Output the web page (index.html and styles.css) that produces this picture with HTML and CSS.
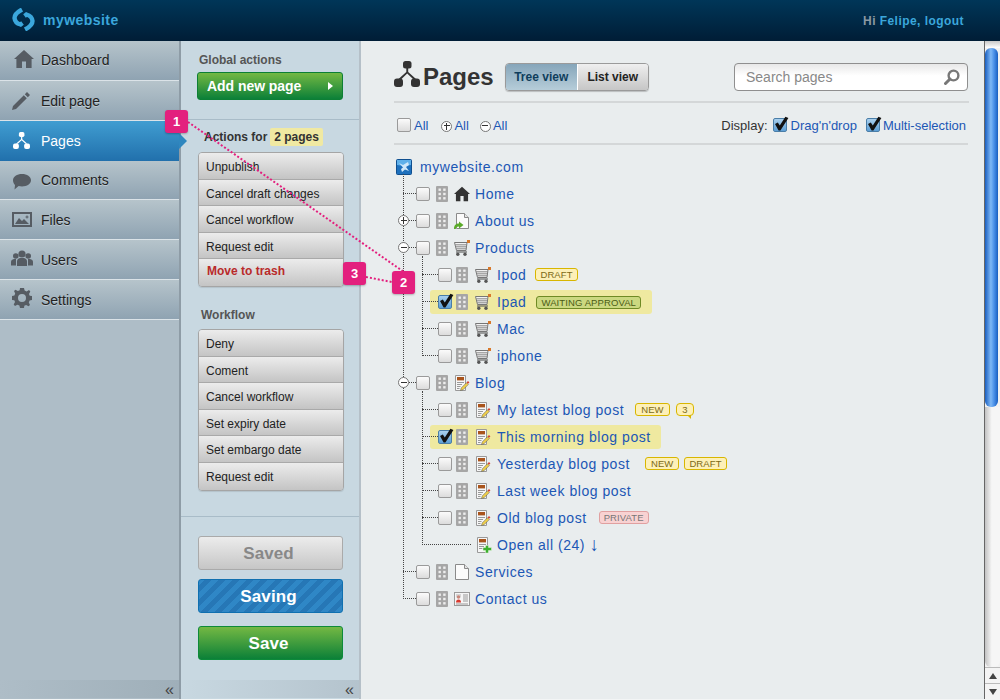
FILE: index.html
```html
<!DOCTYPE html>
<html lang="en">
<head>
<meta charset="utf-8">
<title>Pages</title>
<link rel="stylesheet" href="styles.css">
</head>
<body>
<svg class="defs" width="0" height="0">
  <symbol id="i-home" viewBox="0 0 20 18"><path d="M10 0 L20 9 L17.6 9 L17.6 18 L12 18 L12 11.5 L8 11.5 L8 18 L2.4 18 L2.4 9 L0 9 Z"/></symbol>
  <symbol id="i-pencil" viewBox="0 0 18 18"><path d="M0 18 L1 14 L11.8 3.2 L14.8 6.2 L4 17 Z M12.8 2.2 L15 0 L18 3 L15.8 5.2 Z"/></symbol>
  <symbol id="i-tree" viewBox="0 0 26 26"><rect x="9" y="0" width="8.5" height="7.5" rx="2.5"/><path d="M12.3 7 H14.2 V11 L22 18 H19 L13.2 12.6 L7.5 18 H4.5 L12.3 11 Z"/><rect x="0" y="17.5" width="9" height="8.5" rx="3"/><rect x="17" y="17.5" width="9" height="8.5" rx="3"/></symbol>
  <symbol id="i-comment" viewBox="0 0 18 16"><path d="M9 0 C14 0 18 2.6 18 6.3 C18 10 14 12.5 9 12.5 C7.8 12.5 6.6 12.4 5.6 12.1 L1.5 15.5 L2 11 C.7 9.8 0 8.2 0 6.3 C0 2.6 4 0 9 0 Z"/></symbol>
  <symbol id="i-image" viewBox="0 0 20 15"><path fill-rule="evenodd" d="M0 0 H20 V15 H0 Z M2 2 V13 H18 V2 Z"/><path d="M3 12 L7 6 L10 9 L12 7 L17 12 Z M14.5 3.5 h1 v1 h1 v1 h-1 v1 h-1 v-1 h-1 v-1 h1 Z"/></symbol>
  <symbol id="i-users" viewBox="0 0 22 16"><circle cx="11" cy="4" r="3.6"/><circle cx="4.8" cy="6" r="2.8"/><circle cx="17.2" cy="6" r="2.8"/><path d="M6 16 V11.5 Q6 8.5 9 8 H13 Q16 8.5 16 11.5 V16 Z M0 15.5 V12 Q0 9.5 3 9 H5 V15.5 Z M22 15.5 V12 Q22 9.5 19 9 H17 V15.5 Z"/></symbol>
  <symbol id="i-gear" viewBox="0 0 20 20"><path fill-rule="evenodd" d="M8 0 H12 L12.6 2.6 L14.6 3.4 L17 2 L18.3 3.5 L17 6 L17.7 7.7 L20 8 V12 L17.6 12.6 L16.8 14.6 L18 17 L16.5 18.3 L14.1 17 L12.3 17.7 L12 20 H8 L7.4 17.6 L5.4 16.8 L3 18 L1.7 16.5 L3 14.1 L2.3 12.3 L0 12 V8 L2.4 7.4 L3.2 5.4 L2 3 L3.5 1.7 L5.9 3 L7.7 2.3 Z M10 6 A4 4 0 1 0 10 14 A4 4 0 1 0 10 6 Z"/></symbol>
  <symbol id="i-grip" viewBox="0 0 12 16"><rect width="12" height="16" rx="1" fill="#a6a6a6"/><g fill="#eee"><rect x="2.5" y="2.5" width="2.4" height="2.4"/><rect x="7.2" y="2.5" width="2.4" height="2.4"/><rect x="2.5" y="6.8" width="2.4" height="2.4"/><rect x="7.2" y="6.8" width="2.4" height="2.4"/><rect x="2.5" y="11.1" width="2.4" height="2.4"/><rect x="7.2" y="11.1" width="2.4" height="2.4"/></g></symbol>
  <symbol id="i-cart" viewBox="0 0 16 16"><path d="M.5 2.5 H13 L12 10.5 H2.5 Z" fill="#f2f2f2" stroke="#777"/><path d="M1.2 4.8 H12.6 M1.7 6.8 H12.4 M2.2 8.8 H12.2" stroke="#888" stroke-width="1"/><path d="M13 2.5 L13.6 1.5" stroke="#666"/><rect x="13" y="0" width="3" height="3" fill="#d8792a"/><path d="M2 12 H13" stroke="#666" stroke-width="1.2"/><circle cx="3.8" cy="14.2" r="1.7" fill="#555"/><circle cx="11" cy="14.2" r="1.7" fill="#555"/></symbol>
  <symbol id="i-blog" viewBox="0 0 16 16"><path d="M1.5.5 H11.5 V15.5 H1.5 Z" fill="#f6f6f6" stroke="#999"/><rect x="3" y="2" width="7" height="3.4" fill="#a9541c"/><path d="M3 7.5 H10 M3 9.5 H8 M3 11.5 H6.5 M3 13.5 H5.5" stroke="#999"/><path d="M6.5 15.5 L7.2 13 L12.5 7.7 L14.3 9.5 L9 14.8 Z" fill="#efcf4a" stroke="#555" stroke-width=".5"/><rect x="13" y="6.4" width="2" height="2" fill="#d8442e" transform="rotate(45 14 7.4)"/></symbol>
  <symbol id="i-blogadd" viewBox="0 0 16 16"><path d="M1.5.5 H11.5 V15.5 H1.5 Z" fill="#f6f6f6" stroke="#999"/><rect x="3" y="2" width="7" height="3.4" fill="#a9541c"/><path d="M3 7.5 H10 M3 9.5 H8 M3 11.5 H6.5" stroke="#999"/><path d="M9.5 8.5 H12.5 V10.5 H15.5 V13.5 H12.5 V16 H9.5 V13.5 H7 V10.5 H9.5 Z" fill="#3cb02e" stroke="#e8f4e0" stroke-width=".5"/></symbol>
  <symbol id="i-page" viewBox="0 0 14 16"><path d="M.5.5 H9.5 L13.5 4.5 V15.5 H.5 Z" fill="#fbfbfb" stroke="#8a8a8a"/><path d="M9.5.5 V4.5 H13.5" fill="#e4e4e4" stroke="#8a8a8a"/></symbol>
  <symbol id="i-pagelink" viewBox="0 0 16 16"><path d="M2.5.5 H10.5 L14.5 4.5 V15.5 H2.5 Z" fill="#fbfbfb" stroke="#8a8a8a"/><path d="M10.5.5 V4.5 H14.5" fill="#e4e4e4" stroke="#8a8a8a"/><path d="M0 16 C0 12 2 10.5 5 10.5 V8.5 L9.5 12 L5 15.5 V13.5 C3 13.5 2 14.2 1.8 16 Z" fill="#5bab2a"/></symbol>
  <symbol id="i-card" viewBox="0 0 16 14"><rect x=".5" y=".5" width="15" height="13" fill="#f5f5f5" stroke="#9a9a9a"/><rect x="2" y="2" width="5" height="3.5" fill="#d5d5d5"/><circle cx="4.5" cy="5" r="1.7" fill="#c9877a"/><path d="M2 10.5 Q2 7.5 4.5 7.5 Q7 7.5 7 10.5 Z" fill="#d8392e"/><path d="M9 3 H14 M9 5 H14 M9 7 H14 M9 9 H14 M2 12 H14" stroke="#999"/></symbol>
  <symbol id="i-site" viewBox="0 0 16 16"><rect x=".5" y=".5" width="15" height="15" rx="1" fill="#1d70bd" stroke="#0f4f8f"/><path d="M1 1 H15 V6 Q8 7 1 6 Z" fill="#5eb0ea"/><path d="M3 4 L7 6 L12 3 L13 6 L10 8 L13 12 L9 10.5 L6 13 L5 10 L7 8.5 Z" fill="#cfe8fa"/></symbol>
  <symbol id="i-tick" viewBox="0 0 16 16"><path d="M2 8 L4.8 6.4 L6.8 9.6 L12.4 .8 L15.4 2 L7.4 14.6 H5.6 Z" fill="#111"/></symbol>
  <symbol id="i-logo" viewBox="0 0 23 23"><path d="M10 1.5 Q2.5 5.5 2.5 10 Q3 15 8.5 16.5 L10.5 15 M13 21.5 Q20.5 17.5 20.5 13 Q20 8 14.5 6.5 L12.5 8" fill="none" stroke="#3ba7dc" stroke-width="4.4"/></symbol>
  <symbol id="i-search" viewBox="0 0 16 16"><circle cx="9.5" cy="6.5" r="4.9" fill="none" stroke="#777" stroke-width="2.4"/><path d="M6 10 L1.5 14.5" stroke="#777" stroke-width="3" stroke-linecap="round"/></symbol>
</svg>

<header class="topbar">
  <div class="brand"><svg class="brand-logo"><use href="#i-logo"/></svg><span class="brand-name">mywebsite</span></div>
  <div class="hello">Hi <a class="hello-link">Felipe, logout</a></div>
</header>

<div class="shell">
  <nav class="sidebar">
    <ul class="nav">
      <li class="nav-item first"><svg class="nav-icon ni-home"><use href="#i-home"/></svg>Dashboard</li>
      <li class="nav-item"><svg class="nav-icon ni-pencil"><use href="#i-pencil"/></svg>Edit page</li>
      <li class="nav-item active"><svg class="nav-icon ni-tree"><use href="#i-tree"/></svg>Pages</li>
      <li class="nav-item short"><svg class="nav-icon ni-comment"><use href="#i-comment"/></svg>Comments</li>
      <li class="nav-item"><svg class="nav-icon ni-image"><use href="#i-image"/></svg>Files</li>
      <li class="nav-item"><svg class="nav-icon ni-users"><use href="#i-users"/></svg>Users</li>
      <li class="nav-item"><svg class="nav-icon ni-gear"><use href="#i-gear"/></svg>Settings</li>
    </ul>
    <div class="collapse"><span class="collapse-mark">«</span></div>
  </nav>

  <aside class="panel">
    <section class="pn-global">
      <h3 class="pn-title">Global actions</h3>
      <button class="btn-add"><span>Add new page</span><i class="btn-arrow"></i></button>
    </section>
    <section class="pn-actions">
      <h3 class="pn-for">Actions for <span class="pn-count">2 pages</span></h3>
      <ul class="actions">
        <li>Unpublish</li>
        <li>Cancel draft changes</li>
        <li>Cancel workflow</li>
        <li>Request edit</li>
        <li class="danger">Move to trash</li>
      </ul>
      <h3 class="pn-title pn-wf">Workflow</h3>
      <ul class="actions">
        <li>Deny</li>
        <li>Coment</li>
        <li>Cancel workflow</li>
        <li>Set expiry date</li>
        <li>Set embargo date</li>
        <li>Request edit</li>
      </ul>
    </section>
    <section class="pn-save">
      <button class="big saved">Saved</button>
      <button class="big saving">Saving</button>
      <button class="big save">Save</button>
    </section>
    <div class="collapse light"><span class="collapse-mark">«</span></div>
  </aside>

  <main class="main">
    <div class="head">
      <svg class="head-icon"><use href="#i-tree"/></svg>
      <h1 class="head-title">Pages</h1>
      <div class="toggle"><span class="tg on">Tree view</span><span class="tg">List view</span></div>
      <div class="search"><span>Search pages</span><svg class="search-icon"><use href="#i-search"/></svg></div>
    </div>
    <div class="tools">
      <span class="cb small-gap"></span><a class="lnk">All</a>
      <span class="circ plus t1"></span><a class="lnk">All</a>
      <span class="circ minus t2"></span><a class="lnk">All</a>
      <span class="spacer"></span>
      <span class="disp">Display:</span>
      <span class="cb on"><svg><use href="#i-tick"/></svg></span><a class="lnk">Drag'n'drop</a>
      <span class="cb on t3"><svg><use href="#i-tick"/></svg></span><a class="lnk">Multi-selection</a>
    </div>

    <div class="row root"><svg class="ic"><use href="#i-site"/></svg><a class="name">mywebsite.com</a></div>
    <ul class="tree">
      <li><div class="row"><span class="cb"></span><svg class="grip"><use href="#i-grip"/></svg><svg class="ic"><use href="#i-home"/></svg><a class="name">Home</a></div></li>
      <li><div class="row"><span class="circ plus"></span><span class="cb"></span><svg class="grip"><use href="#i-grip"/></svg><svg class="ic"><use href="#i-pagelink"/></svg><a class="name">About us</a></div></li>
      <li><div class="row"><span class="circ minus"></span><span class="cb"></span><svg class="grip"><use href="#i-grip"/></svg><svg class="ic"><use href="#i-cart"/></svg><a class="name">Products</a></div>
        <ul class="tree sub">
          <li><div class="row"><span class="cb"></span><svg class="grip"><use href="#i-grip"/></svg><svg class="ic"><use href="#i-cart"/></svg><a class="name">Ipod</a><span class="tag draft">DRAFT</span></div></li>
          <li><div class="row sel sel-a"><span class="cb on"><svg><use href="#i-tick"/></svg></span><svg class="grip"><use href="#i-grip"/></svg><svg class="ic"><use href="#i-cart"/></svg><a class="name">Ipad</a><span class="tag wait">WAITING APPROVAL</span></div></li>
          <li><div class="row"><span class="cb"></span><svg class="grip"><use href="#i-grip"/></svg><svg class="ic"><use href="#i-cart"/></svg><a class="name">Mac</a></div></li>
          <li><div class="row"><span class="cb"></span><svg class="grip"><use href="#i-grip"/></svg><svg class="ic"><use href="#i-cart"/></svg><a class="name">iphone</a></div></li>
        </ul>
      </li>
      <li><div class="row"><span class="circ minus"></span><span class="cb"></span><svg class="grip"><use href="#i-grip"/></svg><svg class="ic"><use href="#i-blog"/></svg><a class="name">Blog</a></div>
        <ul class="tree sub">
          <li><div class="row"><span class="cb"></span><svg class="grip"><use href="#i-grip"/></svg><svg class="ic"><use href="#i-blog"/></svg><a class="name">My latest blog post</a><span class="tag new">NEW</span><span class="tag bubble">3</span></div></li>
          <li><div class="row sel sel-b"><span class="cb on"><svg><use href="#i-tick"/></svg></span><svg class="grip"><use href="#i-grip"/></svg><svg class="ic"><use href="#i-blog"/></svg><a class="name">This morning blog post</a></div></li>
          <li><div class="row"><span class="cb"></span><svg class="grip"><use href="#i-grip"/></svg><svg class="ic"><use href="#i-blog"/></svg><a class="name">Yesterday blog post</a><span class="tag new far">NEW</span><span class="tag draft near">DRAFT</span></div></li>
          <li><div class="row"><span class="cb"></span><svg class="grip"><use href="#i-grip"/></svg><svg class="ic"><use href="#i-blog"/></svg><a class="name">Last week blog post</a></div></li>
          <li><div class="row"><span class="cb"></span><svg class="grip"><use href="#i-grip"/></svg><svg class="ic"><use href="#i-blog"/></svg><a class="name">Old blog post</a><span class="tag priv">PRIVATE</span></div></li>
          <li><div class="row openall"><svg class="ic"><use href="#i-blogadd"/></svg><a class="name">Open all (24) <span class="down-arrow">↓</span></a></div></li>
        </ul>
      </li>
      <li><div class="row"><span class="cb"></span><svg class="grip"><use href="#i-grip"/></svg><svg class="ic"><use href="#i-page"/></svg><a class="name">Services</a></div></li>
      <li><div class="row"><span class="cb"></span><svg class="grip"><use href="#i-grip"/></svg><svg class="ic"><use href="#i-card"/></svg><a class="name">Contact us</a></div></li>
    </ul>
  </main>

  <div class="scrollbar">
    <div class="sb-cap"></div>
    <div class="sb-thumb"></div>
    <div class="sb-track"></div>
    <div class="sb-btn"><i class="up"></i></div>
    <div class="sb-btn"><i class="down"></i></div>
  </div>
</div>

<svg class="notes" width="1000" height="700">
  <path d="M188 122 L404 272 M366 277 L392 282" fill="none" stroke="#e3207e" stroke-width="2" stroke-dasharray="2 2"/>
</svg>
<span class="mark m1">1</span>
<span class="mark m2">2</span>
<span class="mark m3">3</span>
</body>
</html>
```

FILE: styles.css
```css
* { box-sizing: border-box; }
html, body { margin: 0; padding: 0; }
body {
  width: 1000px; height: 700px; overflow: hidden; position: relative;
  font-family: "Liberation Sans", Arial, sans-serif; font-size: 12px; color: #333;
  background: #f3f5f5;
}
ul { list-style: none; margin: 0; padding: 0; }
h1, h3 { margin: 0; }
button { font-family: inherit; cursor: pointer; }
.defs { position: absolute; }

/* top bar */
.topbar {
  height: 41px; display: flex; justify-content: space-between; align-items: center;
  padding: 0 36px 0 12px;
  background: linear-gradient(#003658, #001d36);
}
.brand { display: flex; align-items: center; gap: 8px; }
.brand-logo { width: 23px; height: 23px; margin-top: -3px; }
.brand-name { font-size: 14px; font-weight: bold; color: #3ba7dc; letter-spacing: .45px; margin-top: -2px; }
.hello { font-weight: bold; font-size: 12px; letter-spacing: .45px; color: #8b99a3; }
.hello-link { color: #3ba7dc; }

/* layout */
.shell { display: flex; height: 658px; }

/* sidebar */
.sidebar {
  width: 181px; flex: none; display: flex; flex-direction: column;
  background: #aebdc7; border-right: 2px solid #8e9ca6;
}
.nav { flex: 1; }
.nav-item {
  height: 40px; display: flex; align-items: center; position: relative;
  padding-left: 41px; font-size: 14px; color: #222; text-shadow: 0 1px 0 rgba(255,255,255,.35);
  background: linear-gradient(#b6c4cb, #8fa3b2);
  border-bottom: 1px solid #dbe3e8;
}
.nav-item.first { padding-bottom: 2px; }
.nav-item.short { height: 39px; }
.nav-item.active {
  color: #fff; text-shadow: none; border-bottom: none;
  background: linear-gradient(#409dd1, #2170ac);
}
.nav-item.active::after {
  content: ""; position: absolute; left: 179px; top: 12px;
  border-left: 8px solid #2f87bf; border-top: 8px solid transparent; border-bottom: 8px solid transparent;
}
.nav-icon { position: absolute; fill: #565c63; }
.ni-home { left: 14px; top: 9px; width: 20px; height: 18px; }
.ni-pencil { left: 12px; top: 11px; width: 18px; height: 18px; }
.ni-tree { left: 13px; top: 11px; width: 17px; height: 17px; fill: #fff; }
.ni-comment { left: 13px; top: 13px; width: 18px; height: 16px; }
.ni-image { left: 12px; top: 12px; width: 20px; height: 15px; }
.ni-users { left: 11px; top: 10px; width: 22px; height: 16px; }
.ni-gear { left: 12px; top: 8px; width: 20px; height: 20px; }
.collapse {
  height: 18px; flex: none; margin-bottom: 1px; position: relative;
  background: linear-gradient(90deg, #aebdc7, #9fafb9);
  text-align: right; padding-right: 5px;
}
.collapse.light { background: linear-gradient(90deg, #c8d8e1, #b4c3cd); }
.collapse-mark { font-size: 16px; line-height: 19px; color: #444; }

/* action panel */
.panel {
  width: 180px; flex: none; display: flex; flex-direction: column;
  background: #c8d8e1; border-right: 2px solid #b5c0c8;
}
.pn-global { height: 79px; padding: 12px 0 0 16px; border-bottom: 1px solid #a9bcc8; }
.pn-title { font-size: 12px; font-weight: bold; color: #555; line-height: 14px; padding-left: 2px; }
.btn-add {
  margin-top: 5px; width: 146px; height: 28px; padding: 0 9px;
  display: flex; justify-content: space-between; align-items: center;
  font-size: 14px; font-weight: bold; color: #fff; letter-spacing: -.05px;
  border: 1px solid #0d7f35; border-radius: 3px;
  background: linear-gradient(#74b843, #0b8038);
}
.btn-arrow { border-left: 5px solid #fff; border-top: 4px solid transparent; border-bottom: 4px solid transparent; }
.pn-actions { height: 397px; padding: 8px 0 0 17px; border-bottom: 1px solid #a9bcc8; }
.pn-for { font-size: 12px; font-weight: bold; color: #333; padding-left: 6px; line-height: 18px; }
.pn-count { display: inline-block; background: #f0e9a2; border-radius: 2px; padding: 0 4.5px; margin-left: -1px; color: #333; }
.actions {
  width: 146px; margin-top: 6px; border: 1px solid #a5a5a5; border-radius: 4px; overflow: hidden;
  box-shadow: 0 1px 1px rgba(0,0,0,.1);
}
.actions li {
  height: 26.6px; line-height: 28px; padding-left: 7px; font-size: 12px; color: #222;
  background: linear-gradient(#ececec, #c4c4c4);
  border-bottom: 1px solid #a9a9a9;
}
.actions li:last-child { border-bottom: none; }
.actions .danger { color: #b92a2a; font-weight: bold; padding-left: 8px; line-height: 25px; }
.pn-wf { margin-top: 21px; padding-left: 3px; }
.pn-wf + .actions { margin-top: 7px; }
.pn-wf + .actions li { line-height: 29.5px; }
.pn-save { flex: 1; padding: 19px 0 0 17px; }
.big {
  display: block; width: 145px; height: 34px; border-radius: 3px; padding: 1px 4px 0 0;
  font-size: 17px; font-weight: bold; color: #fff; letter-spacing: .1px;
}
.saved { color: #888; border: 1px solid #aaa; background: linear-gradient(#ececec, #c6c6c6); }
.saving {
  margin-top: 9px; border: 1px solid #0f70b0;
  background: repeating-linear-gradient(-45deg, #2f87c6 0 5px, #2677b6 5px 10px);
}
.save { margin-top: 13px; border: 1px solid #0d8a3a; background: linear-gradient(#74b843, #0b8038); }

/* main */
.main { flex: 1; min-width: 0; padding: 0 15px 0 33px; background: #e9edee; }
.head { height: 62px; display: flex; align-items: flex-start; border-bottom: 2px solid #d4d7d8; }
.head-icon { width: 26px; height: 26px; margin-top: 20px; fill: #333; flex: none; }
.head-title { font-size: 24px; font-weight: bold; color: #333; line-height: 28px; margin: 22px 0 0 3px; }
.toggle {
  display: flex; margin: 22px 0 0 11px; height: 28px; border: 1px solid #9a9a9a; border-radius: 4px; overflow: hidden;
  box-shadow: 0 1px 1px rgba(0,0,0,.2);
}
.tg {
  width: 70px; text-align: center; line-height: 26px; font-weight: bold; color: #222; font-size: 12px;
  background: linear-gradient(#efefef, #c6c6c6);
}
.tg.on { width: 72px; color: #0f3e5c; background: linear-gradient(#86a6ba, #b6cdd9); border-right: 1px solid #fff; }
.search {
  margin: 22px 1px 0 auto; width: 234px; height: 28px; border: 1px solid #8f8f8f; border-radius: 4px;
  display: flex; align-items: center; justify-content: space-between; padding: 0 7px 0 11px;
  font-size: 14px; color: #888; background: linear-gradient(#e8e8e8, #fff 45%);
}
.search-icon { width: 16px; height: 16px; }
.tools { height: 42px; display: flex; align-items: center; padding: 4px 2px 0 3px; font-size: 13px; margin-right: 1px; border-bottom: 2px solid #d4d7d8; }
.lnk { color: #1c57b5; }
.tools .cb { margin-right: 3px; }
.tools .disp + .cb { margin-right: 4px; }
.tools .circ { position: relative; left: 0; top: 1px; margin-right: 2px; }
.tools .t1 { margin-left: 13px; }
.tools .t2 { margin-left: 11px; }
.tools .t3 { margin-left: 9px; }
.spacer { flex: 1; }
.disp { color: #333; margin-right: 5px; }

/* tree */
.row { height: 27px; display: flex; align-items: center; position: relative; }
.row.root { margin-top: 8px; padding-left: 2px; }
.root .ic { width: 16px; height: 16px; margin-right: 8px; }
.name { color: #1c57b5; font-size: 14px; letter-spacing: .55px; white-space: nowrap; }
.down-arrow { font-size: 19px; line-height: 14px; letter-spacing: 0; vertical-align: -1px; }
.tree { position: relative; padding-left: 22px; }
.tree::before {
  content: ""; position: absolute; left: 9px; top: -6px; bottom: 13px;
  border-left: 1px dotted #444;
}
.tree .row::before {
  content: ""; position: absolute; left: -13px; top: 13px; width: 13px;
  border-top: 1px dotted #444;
}
.tree.sub { padding-left: 22px; }
.tree.sub::before { left: 6px; top: -5px; }
.tree.sub .row::before { left: -16px; width: 16px; }
.cb {
  width: 14px; height: 14px; flex: none; position: relative;
  border: 1px solid #9a9a9a; border-radius: 2px;
  background: linear-gradient(#fbfbfb, #dcdcdc);
}
.cb.on { border-color: #4a7ea8; background: linear-gradient(#a9d0ee, #5d9fd6); }
.cb svg { position: absolute; left: -1px; top: -3px; width: 16px; height: 16px; }
.grip { width: 12px; height: 16px; margin: 0 6px; flex: none; }
.ic { width: 16px; height: 16px; margin-right: 5px; flex: none; fill: #333; }
.circ {
  position: absolute; left: -18px; top: 8px; width: 11px; height: 11px; border-radius: 50%;
  border: 1px solid #777; background: #fff; flex: none; z-index: 1;
}
.circ::before {
  content: ""; position: absolute; left: 1.5px; top: 3.5px; width: 6px; height: 1px; background: #333;
}
.circ.plus::after {
  content: ""; position: absolute; left: 4px; top: 1px; width: 1px; height: 7px; background: #333;
}
.tree.sub .grip { margin: 0 7px 0 4px; }
.tree.sub .ic { margin-right: 6px; }
.sel { background: #efe9a0; border-radius: 3px; margin: 2px 0 1px -8px; height: 24px; padding-left: 8px; width: fit-content; }
.tree.sub .sel::before { left: -8px; top: 11px; width: 16px; }
.sel-a { padding-right: 11px; }
.sel-b { padding-right: 10px; }
.openall { padding-left: 38px; }
.tree.sub .openall::before { width: 49px; top: 13px; }
.tree.sub .openall .ic { margin-right: 5px; }
.tag {
  height: 13px; line-height: 11px; font-size: 9.5px; letter-spacing: .1px; padding: 0 4px; margin-left: 9px;
  border-radius: 3px; border: 1px solid; flex: none;
}
.draft { color: #7c6a16; background: #fdf0b8; border-color: #d8b600; }
.new { color: #7c6a16; background: #fdf0b8; border-color: #d8b600; padding: 0 5px; margin-left: 11px; }
.wait { color: #4c5c16; background: #cbd880; border-color: #6f8a24; margin-left: 10px; }
.priv { color: #777; background: #f8d2d2; border-color: #e0a0a0; margin-left: 12px; }
.far { margin-left: 15px; }
.near { margin-left: 5px; }
.bubble { position: relative; margin-left: 6px; padding: 0 5.5px; color: #7c6a16; background: #fdf0b8; border-color: #d8b600; border-radius: 4px; }
.bubble::after {
  content: ""; position: absolute; right: 2px; bottom: -4px;
  border-top: 4px solid #d8b600; border-left: 4px solid transparent;
}

/* scrollbar */
.scrollbar { width: 16px; flex: none; display: flex; flex-direction: column; border-left: 1px solid #666; background: #f2f2f2; }
.sb-cap { height: 7px; background: linear-gradient(#c8c8c8, #fff); }
.sb-thumb {
  height: 359px; width: 13px; border-radius: 6px;
  background: linear-gradient(90deg, #1a5fc0, #7fb8f5 45%, #4a90e8 70%, #1a5fc0);
}
.sb-track { flex: 1; background: linear-gradient(90deg, #c2c2c2, #f6f6f6 45%, #f6f6f6); border-radius: 0 0 6px 6px; }
.sb-btn { height: 16px; flex: none; display: flex; align-items: center; justify-content: center; border-top: 1px solid #bbb; background: #f4f4f4; }
.up { border-bottom: 6px solid #444; border-left: 4px solid transparent; border-right: 4px solid transparent; }
.down { border-top: 6px solid #444; border-left: 4px solid transparent; border-right: 4px solid transparent; }

/* annotations */
.notes { position: absolute; left: 0; top: 0; pointer-events: none; }
.mark {
  position: absolute; width: 23px; height: 23px; border-radius: 3px; background: #e3207e; color: #fff;
  font-size: 13px; font-weight: bold; text-align: center; line-height: 23px;
  box-shadow: 0 1px 2px rgba(0,0,0,.25);
}
.m1 { left: 165px; top: 110px; }
.m2 { left: 392px; top: 271px; }
.m3 { left: 343px; top: 262px; }
```
